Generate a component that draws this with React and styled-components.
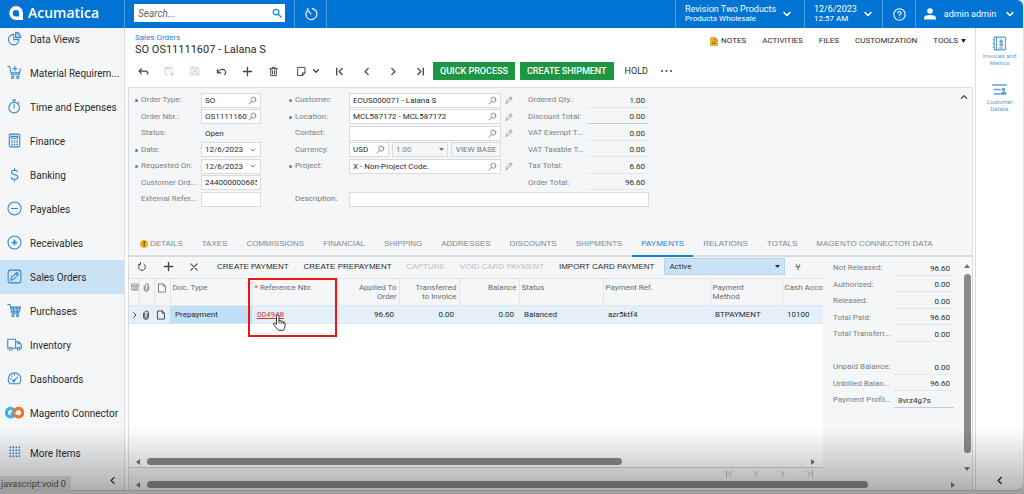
import { useState } from "react";
import styled, { createGlobalStyle, css } from "styled-components";

const GlobalStyle = createGlobalStyle`
  :root {
    --blue: #0073d3;
    --link: #1b83d6;
    --panel: #f5f6f8;
    --line: #d9dbde;
    --text: #2b2b2b;
    --muted: #7b7d80;
    --select: #c9e2f6;
    --green: #1c9643;
  }
  * {
    box-sizing: border-box;
  }
  body {
    margin: 0;
    background: #e4e4e4;
    color: var(--text);
    font: 8px/10px Roboto, "Liberation Sans", sans-serif;
  }
  button,
  input,
  select {
    font: inherit;
    color: inherit;
    margin: 0;
    padding: 0;
    border: none;
    border-radius: 0;
    background: none;
    outline: none;
  }
  button {
    cursor: pointer;
  }
  a {
    color: inherit;
    text-decoration: none;
  }
  svg {
    display: block;
    flex: none;
  }
`;

/* ---------- icons ---------- */

const Svg = ({ size = 12, w, h, box = 16, stroke = 1.3, children, ...rest }) => (
  <svg
    width={w || size}
    height={h || size}
    viewBox={`0 0 ${box} ${box}`}
    fill="none"
    stroke="currentColor"
    strokeWidth={stroke}
    strokeLinecap="round"
    strokeLinejoin="round"
    aria-hidden="true"
    {...rest}
  >
    {children}
  </svg>
);

const shapes = {
  back: <path d="M5 4 1.5 7.5 5 11M2 7.500h9q3.500 0 3.500 4.500" />,
  saveClose: <path d="M6 14H2V2h10l2 2v3M5 2v3h5V2M14 10v4h-4M9 9l5 5" />,
  save: <path d="M2 2h10l2 2v10H2zM5 2v4h6V2M5 14V9h6v5" />,
  undo: <path d="M2 5v5h5M2.500 9.500C5 5 10 3.500 13 6.500c1.500 2 1 4.500-.5 6" />,
  plus: <path d="M8 2v12M2 8h12" />,
  trash: <path d="M2.500 4h11M6 4V2h4v2M4 4v10h8V4M6.500 7v4.500M9.500 7v4.500" />,
  copy: <path d="M3 2h10v8l-3.500 4H3zM13 10H9.500v4" />,
  down: <path d="m4 6 4 4 4-4" />,
  up: <path d="m4 10 4-4 4 4" />,
  first: <path d="M4 3v10M12 3.500 7.500 8l4.500 4.500" />,
  prev: <path d="M10.500 3.500 6 8l4.500 4.500" />,
  next: <path d="M5.500 3.500 10 8l-4.500 4.500" />,
  last: <path d="M12 3v10M4 3.500 8.500 8 4 12.500" />,
  close: <path d="m3 3 10 10M13 3 3 13" />,
  refresh: <path d="M5 3.300a5.500 5.500 0 1 0 6 0M5.500.800v3H2.500" />,
  search: (
    <>
      <circle cx="9.500" cy="6.500" r="4.500" />
      <path d="m6.200 9.800-4.500 4.500" />
    </>
  ),
  searchRight: (
    <>
      <circle cx="6.500" cy="6.500" r="4.500" />
      <path d="m10 10 4.500 4.500" />
    </>
  ),
  pencil: <path d="m2 14 1-4L11.500 1.500l3 3L6 13zM9.500 3.500l3 3" />,
  clip: <path d="M4 5v6a4 4 0 0 0 8 0V4.500a3 3 0 0 0-6 0V11a2 2 0 0 0 4 0V5.500" />,
  page: <path d="M3 1.500h7l3.500 3.500v9.500H3zM10 1.500V5h3.500" />,
  columns: <path d="M2 2h12v12H2zM2 6h12M6 6v8M10 6v8" />,
  filter: <path d="M4 2l2 3M12 2l-2 3M4 7h8M5 7l3 4 3-4M8 11v3" />,
  timer: (
    <>
      <path d="M4.200 3.500a6.300 6.300 0 1 0 5.300-1.600" />
      <path d="m5 4.500 3 3.500M4.500 1.500l-.5 2.500" />
    </>
  ),
  help: (
    <>
      <circle cx="8" cy="8" r="7" />
      <path d="M6 6.200a2 2 0 1 1 2.800 1.900Q8 8.500 8 9.500M8 11.700v.1" />
    </>
  ),
};

const Icon = ({ name, ...rest }) => <Svg {...rest}>{shapes[name]}</Svg>;

const navShapes = {
  data: (
    <>
      <path d="M9 4.500a7 7 0 1 0 7 7H9z" />
      <path d="M11.500 1.500v7.300h6.800A7 7 0 0 0 11.500 1.500z" fill="#a8d0f0" />
    </>
  ),
  material: (
    <>
      <path d="M1 2h2.500l2.500 11h10l2-8M5.500 10.500h11M10.500 2v6M7.500 5h6" />
      <circle cx="7.500" cy="16.500" r="1.500" />
      <circle cx="14.500" cy="16.500" r="1.500" />
    </>
  ),
  time: (
    <>
      <circle cx="9.500" cy="11.500" r="7" />
      <path d="M7.500 1.500h4M9.500 1.500v3M9.500 7.500v4.500M15 5.500l1.500-1.500" />
    </>
  ),
  finance: (
    <>
      <rect x="3" y="1.500" width="14" height="17" rx="1.500" />
      <path d="M5.500 4.500h9v2.500h-9zM6 10.500h1M9.500 10.500h1M13 10.500h1M6 13h1M9.500 13h1M13 13h1M6 15.500h1M9.500 15.500h1M13 15.500h1" />
    </>
  ),
  banking: <path d="M14 6.500C13.500 4 6 3 6 7c0 3.500 8.500 2.500 8.500 6.300S6.500 17.500 5.500 14M10 1.500v3M10 16.300v2.500" />,
  payables: (
    <>
      <circle cx="10" cy="10" r="8.700" />
      <path d="M6 10h8" />
    </>
  ),
  receivables: (
    <>
      <circle cx="10" cy="10" r="8.700" />
      <path d="M7 10h6M10 7v6" strokeWidth="2" />
    </>
  ),
  orders: (
    <>
      <rect x="1.500" y="1.500" width="17" height="17" rx="3" />
      <path d="m5 15 1-3.500L13 4.500l2.500 2.500-7 7zM11.500 6l2.500 2.500" />
    </>
  ),
  purchases: (
    <>
      <path d="M1 2h3l2.500 11.500h9L18 5.500H5M5.500 8h12M6 11h10.500M8.500 5.500l1 8M13.500 5.500l-.5 8" />
      <circle cx="8" cy="16.800" r="1.500" />
      <circle cx="14" cy="16.800" r="1.500" />
    </>
  ),
  inventory: (
    <>
      <path d="M3 15H1V3h10.500v12H7M11.500 6.500H16l3 4V15h-1.500M13.500 15h-2M14 9h3" />
      <circle cx="5" cy="15.500" r="1.900" />
      <circle cx="15.500" cy="15.500" r="1.900" />
    </>
  ),
  dashboards: (
    <>
      <path d="M4 17a8.500 8.500 0 1 1 12 0z" />
      <path d="M9 13.500 14 8M10 4.500v1M4.500 10.500h1M6 6.500l.7.700" />
      <circle cx="9" cy="13" r="1.300" />
    </>
  ),
};

const NavIcon = ({ name }) => {
  if (name === "magento") {
    return (
      <svg width="19" height="13" viewBox="0 0 38 26" fill="none" strokeWidth="6.500" strokeLinecap="round" aria-hidden="true">
        <path d="M17 19.500A8.500 8.500 0 1 1 18.500 9" stroke="#35b4f3" />
        <path d="M21 19.500a8.500 8.500 0 1 0-1.500-10L15 16" stroke="#f5702a" />
        <path d="M12.500 15q3.500-1 5 3" stroke="#35b4f3" strokeWidth="4" />
      </svg>
    );
  }
  if (name === "more") {
    return (
      <svg width="12" height="12" viewBox="0 0 12 12" fill="#2f86cc" aria-hidden="true">
        {[0, 3, 6, 9].map((x) => [0, 3, 6, 9].map((y) => <rect key={`${x}-${y}`} x={x + 0.5} y={y + 0.5} width="1.600" height="1.600" />))}
      </svg>
    );
  }
  return (
    <Svg size={15} box={20} stroke={1.4}>
      {navShapes[name]}
    </Svg>
  );
};

const Arrow = ({ points = "0,0 6,0 3,4", w = 6, h = 4 }) => (
  <svg width={w} height={h} viewBox={`0 0 ${w} ${h}`} fill="currentColor" aria-hidden="true">
    <polygon points={points} />
  </svg>
);

/* ---------- shell ---------- */

const Shell = styled.div`
  min-height: 100vh;
  display: flex;
  padding: 0 1px 3px 0;
  position: relative;
`;
const Window = styled.div`
  flex: 1;
  min-width: 0;
  display: flex;
  flex-direction: column;
  background: white;
  border-radius: 0 6px 8px 0;
  border-bottom: 1px solid #c9c9c9;
  overflow: hidden;
`;
const Shade = styled.div`
  position: absolute;
  inset: auto 0 0 0;
  height: 66px;
  background: linear-gradient(rgba(0, 0, 0, 0), rgba(0, 0, 0, 0.3));
  pointer-events: none;
  z-index: 5;
`;

/* ---------- header ---------- */

const TopBar = styled.header`
  height: 28px;
  display: flex;
  background: var(--blue);
  color: white;
`;
const TopCell = styled.div`
  display: flex;
  align-items: center;
  width: ${({ $width }) => $width || "auto"};
  flex: ${({ $grow }) => ($grow ? 1 : "none")};
  padding: ${({ $pad }) => $pad || "0"};
  justify-content: ${({ $justify }) => $justify || "flex-start"};
  border-right: ${({ $last }) => ($last ? "none" : "1px solid #4b9fe4")};
`;
const Brand = styled.a`
  display: flex;
  align-items: center;
  gap: 5px;
  font: 600 14px/20px "Open Sans", "Noto Sans", sans-serif;
`;
const SearchBox = styled.form`
  flex: 1;
  height: 18px;
  margin-bottom: 2px;
  display: flex;
  align-items: center;
  background: white;
  padding: 0 3px 0 4px;
  color: var(--link);
  input {
    flex: 1;
    min-width: 0;
    font-size: 10px;
    color: #333;
  }
  input::placeholder {
    color: #666;
    font-style: italic;
    opacity: 1;
  }
`;
const TopButton = styled.button`
  display: flex;
  align-items: center;
  justify-content: space-between;
  gap: 5px;
  width: 100%;
  text-align: left;
  font-size: 9px;
  white-space: nowrap;
`;
const TopLines = styled.span`
  display: flex;
  flex-direction: column;
  padding-bottom: 1px;
  small {
    font-size: 8px;
  }
`;

/* ---------- body ---------- */

const Body = styled.div`
  flex: 1;
  display: flex;
  min-height: 0;
`;
const Sidebar = styled.aside`
  width: 125px;
  flex: none;
  display: flex;
  flex-direction: column;
  background: var(--panel);
  border-right: 1px solid var(--line);
  overflow: hidden;
`;
const NavList = styled.nav`
  margin-top: -6px;
  display: flex;
  flex-direction: column;
  flex: 1;
`;
const NavItem = styled.a`
  height: 34px;
  display: flex;
  align-items: center;
  padding-top: 1px;
  font-size: 10px;
  line-height: 12px;
  background: ${({ $active }) => ($active ? "var(--select)" : "none")};
  margin-top: ${({ $spaced }) => ($spaced ? "6px" : "0")};
  > i {
    width: 30px;
    padding-right: 1px;
    padding-bottom: 3px;
    display: flex;
    justify-content: center;
    color: #2f86cc;
  }
`;
const CollapseRow = styled.div`
  height: 20px;
  display: flex;
  align-items: center;
  justify-content: flex-end;
  padding-right: 6px;
`;
const StatusTip = styled.div`
  position: absolute;
  left: 0;
  bottom: 2px;
  height: 16px;
  padding: 3px 5px 3px 1px;
  font-size: 9px;
  background: #dcdcdc;
  color: #555;
  border-radius: 0 3px 0 0;
`;

const Rail = styled.aside`
  width: 48px;
  flex: none;
  border-left: 1px solid var(--line);
  display: flex;
  flex-direction: column;
  align-items: center;
  padding: 8px 0 0;
  gap: 16px;
  > ${CollapseRow} {
    margin-top: auto;
    padding-right: 0;
  }
`;
const RailLink = styled.a`
  display: flex;
  flex-direction: column;
  align-items: center;
  gap: 1px;
  width: 38px;
  text-align: center;
  font-size: 6px;
  line-height: 7px;
  color: #5b9ed8;
`;

const Main = styled.main`
  flex: 1;
  min-width: 0;
  display: flex;
  flex-direction: column;
  margin: 0 2px 0 3px;
`;
const TitleRow = styled.div`
  display: flex;
  justify-content: space-between;
  padding: 5px 7px 0 7px;
`;
const Crumb = styled.a`
  color: var(--link);
`;
const Title = styled.h1`
  margin: 0;
  font-size: 11px;
  line-height: 14px;
  font-weight: 400;
`;
const ScreenMenu = styled.nav`
  display: flex;
  align-items: flex-start;
  gap: 16px;
  padding-top: 3px;
`;
const MenuButton = styled.button`
  display: flex;
  align-items: center;
  gap: 3px;
`;
const Toolbar = styled.div`
  height: 30px;
  display: flex;
  align-items: center;
  padding: 0 0 2px 2px;
`;
const ToolButton = styled.button`
  width: 26px;
  height: 18px;
  display: flex;
  align-items: center;
  justify-content: center;
  color: #444;
  opacity: ${({ disabled }) => (disabled ? 0.3 : 1)};
`;
const SplitGroup = styled.div`
  display: flex;
  align-items: center;
  gap: 4px;
  padding: 0 5px 0 10px;
  color: #444;
`;
const PagerGroup = styled.div`
  display: flex;
  gap: 1px;
`;
const ActionButton = styled.button`
  height: 18px;
  padding: 0 7px;
  margin-right: 5px;
  background: var(--green);
  color: white;
  font-size: 9px;
  font-weight: 500;
`;
const PlainButton = styled.button`
  padding: 0 6px;
  font-size: 9px;
`;

/* ---------- document form ---------- */

const Panel = styled.section`
  flex: 1;
  display: flex;
  flex-direction: column;
  background: var(--panel);
  border: 1px solid var(--line);
  border-bottom: none;
`;
const FormArea = styled.form`
  display: flex;
  gap: 27px;
  padding: 4px 3px 24px 5px;
`;
const FormGrid = styled.div`
  display: grid;
  grid-auto-rows: 16px 17px;
  grid-template-columns: ${({ $columns }) => $columns};
  align-items: center;
  align-content: start;
`;
const FieldLabel = styled.label`
  color: var(--muted);
  white-space: nowrap;
  overflow: hidden;
  text-overflow: ellipsis;
  padding-left: 7px;
  position: relative;
  ${({ $required }) =>
    $required &&
    css`
      &::before {
        content: "";
        position: absolute;
        left: 1px;
        top: 4px;
        width: 3px;
        height: 3px;
        border-radius: 50%;
        background: #77797c;
      }
    `}
`;
const Field = styled.div`
  height: 15px;
  min-width: 0;
  display: flex;
  align-items: center;
  border: 1px solid ${({ $bare }) => ($bare ? "transparent" : "var(--line)")};
  background: ${({ $bare, $gray }) => ($bare || $gray ? "transparent" : "white")};
  padding: 0 3px;
  grid-column: ${({ $span }) => ($span ? `span ${$span}` : "auto")};
  color: ${({ $gray }) => ($gray ? "#888" : "var(--text)")};
  input,
  select {
    flex: 1;
    width: 100%;
    min-width: 0;
    padding-top: 1px;
    appearance: none;
  }
  button,
  > svg {
    color: #777;
  }
`;
const CurrencyRow = styled.div`
  display: grid;
  grid-template-columns: 40px 56px 1fr;
  gap: 3px;
`;
const ViewBase = styled.button`
  border: 1px solid var(--line);
  color: #777;
`;
const EditButton = styled.button`
  padding-left: 4px;
  color: #777;
`;
const TotalInput = styled.input`
  width: 100%;
  height: 15px;
  text-align: ${({ $left }) => ($left ? "left" : "right")};
  padding: 1px 4px 0;
  border-bottom: 1px solid ${({ $strong }) => ($strong ? "#c9cbce" : "#e6e8ea")};
`;
const PanelToggle = styled.button`
  margin-left: auto;
  align-self: flex-start;
  color: #555;
`;

/* ---------- tabs ---------- */

const TabBar = styled.div`
  height: 26px;
  display: flex;
  gap: 1px;
  padding-left: 2px;
  border-bottom: 2px solid var(--line);
  font-family: "Liberation Sans", Arial, sans-serif;
`;
const Tab = styled.button`
  height: 26px;
  padding: 2px 9px 0;
  display: flex;
  align-items: center;
  white-space: nowrap;
  color: ${({ $active }) => ($active ? "var(--link)" : "#85878a")};
  border-bottom: 2px solid ${({ $active }) => ($active ? "var(--link)" : "transparent")};
`;
const Badge = styled.span`
  width: 8px;
  height: 8px;
  margin-right: 2px;
  border-radius: 50%;
  background: #f2b01e;
  color: #3a2a00;
  font: 700 8px/8px "Liberation Sans", sans-serif;
  text-align: center;
`;
const TabContent = styled.div`
  flex: 1;
  display: flex;
  min-height: 0;
`;
const GridPane = styled.div`
  flex: 1;
  min-width: 0;
  display: flex;
  flex-direction: column;
  background: white;
  position: relative;
`;
const GridToolbar = styled(Toolbar)`
  height: 21px;
  background: var(--panel);
  padding-left: 0;
`;
const GridActions = styled.div`
  display: flex;
  gap: 15px;
  padding: 0 10px;
  white-space: nowrap;
  font-family: "Liberation Sans", Arial, sans-serif;
  button:disabled {
    color: #bfc1c4;
  }
`;
const FilterSelect = styled.label`
  width: 121px;
  height: 17px;
  display: flex;
  align-items: center;
  background: var(--select);
  border: 1px solid #b7d3e9;
  padding: 0 4px;
  select {
    flex: 1;
    appearance: none;
  }
`;
const GridClip = styled.div`
  flex: 1;
  overflow: hidden;
`;
const Table = styled.table`
  width: 100%;
  table-layout: fixed;
  border-collapse: collapse;
  th,
  td {
    overflow: hidden;
    white-space: nowrap;
    text-align: left;
  }
  th {
    height: 27px;
    vertical-align: top;
    padding: 4px 2px 0;
    line-height: 9px;
    font-weight: 400;
    color: #696b6e;
    background: var(--panel);
    border: 1px solid #e4e6e8;
    border-left: none;
  }
  th:last-child {
    padding-right: 0;
    border-right: none;
  }
  td {
    height: 18px;
    padding: 0 5px;
    background: #e3f0fa;
    border-bottom: 1px solid #dde5ec;
  }
  .num {
    text-align: right;
  }
  .icon {
    padding-left: 2px;
    padding-right: 0;
  }
  td.current {
    background: #bfdff7;
  }
  td a {
    color: #d9342b;
    text-decoration: underline;
  }
  em {
    color: #e33;
    font-style: normal;
  }
`;
const ScrollRow = styled.div`
  height: 11px;
  display: flex;
  align-items: center;
  gap: 7px;
  padding: 0 ${({ $end }) => $end || "8px"} 0 7px;
  color: #777;
`;
const Thumb = styled.div`
  height: ${({ $vertical }) => ($vertical ? "auto" : "7px")};
  width: ${({ $vertical, $size }) => ($vertical ? "7px" : $size)};
  flex: ${({ $vertical, $size }) => ($vertical ? $size : "none")};
  margin-right: auto;
  border-radius: 4px;
  background: #8b8b8b;
`;
const PagerRow = styled.div`
  height: 12px;
  display: flex;
  justify-content: flex-end;
  align-items: flex-end;
  gap: 17px;
  padding-right: 8px;
  background: var(--panel);
  border-top: 1px solid #cfd1d4;
  color: #aaa;
`;
const Highlight = styled.div`
  position: absolute;
  left: 119px;
  top: 21px;
  width: 89px;
  height: 59px;
  border: 2px solid #f01414;
  pointer-events: none;
  svg {
    position: absolute;
    left: 22px;
    top: 34px;
  }
`;
const SidePane = styled.div`
  width: 139px;
  padding: 3px 8px 0 3px;
`;
const VScroll = styled.div`
  width: 10px;
  display: flex;
  flex-direction: column;
  align-items: center;
  gap: 6px;
  padding: 7px 0 8px;
  background: #f8f9fa;
  color: #777;
  ${Thumb} {
    margin: 0 0 8px;
  }
`;

/* ---------- data ---------- */

const navItems = [
  ["data", "Data Views"],
  ["material", "Material Requirem..."],
  ["time", "Time and Expenses"],
  ["finance", "Finance"],
  ["banking", "Banking"],
  ["payables", "Payables"],
  ["receivables", "Receivables"],
  ["orders", "Sales Orders"],
  ["purchases", "Purchases"],
  ["inventory", "Inventory"],
  ["dashboards", "Dashboards"],
  ["magento", "Magento Connector"],
  ["more", "More Items"],
];

const orderFields = [
  { label: "Order Type:", value: "SO", icon: "search", required: true },
  { label: "Order Nbr.:", value: "OS11111607", icon: "search" },
  { label: "Status:", value: "Open", bare: true },
  { label: "Date:", value: "12/6/2023", icon: "down", required: true },
  { label: "Requested On:", value: "12/6/2023", icon: "down", required: true },
  { label: "Customer Ord...", value: "244000000685" },
  { label: "External Refer...", value: "" },
];

const customerFields = [
  { label: "Customer:", value: "ECUS000071 - Lalana S", required: true, total: ["Ordered Qty.:", "1.00"] },
  { label: "Location:", value: "MCL587172 - MCL587172", required: true, total: ["Discount Total:", "0.00"] },
  { label: "Contact:", value: "", total: ["VAT Exempt T...", "0.00"] },
  { label: "Currency:", currency: true, total: ["VAT Taxable T...", "0.00"] },
  { label: "Project:", value: "X - Non-Project Code.", required: true, total: ["Tax Total:", "6.60"] },
  { total: ["Order Total:", "96.60"] },
];

const tabs = [
  "DETAILS",
  "TAXES",
  "COMMISSIONS",
  "FINANCIAL",
  "SHIPPING",
  "ADDRESSES",
  "DISCOUNTS",
  "SHIPMENTS",
  "PAYMENTS",
  "RELATIONS",
  "TOTALS",
  "MAGENTO CONNECTOR DATA",
];

const gridActions = [
  ["CREATE PAYMENT"],
  ["CREATE PREPAYMENT"],
  ["CAPTURE", true],
  ["VOID CARD PAYMENT", true],
  ["IMPORT CARD PAYMENT"],
];

const paymentTotals = [
  ["Not Released:", "96.60"],
  ["Authorized:", "0.00"],
  ["Released:", "0.00"],
  ["Total Paid:", "96.60"],
  ["Total Transferr...", "0.00"],
  null,
  ["Unpaid Balance:", "0.00"],
  ["Unbilled Balan...", "96.60"],
  ["Payment Profil...", "8vrz4g7s"],
];

/* ---------- parts ---------- */

const Header = () => (
  <TopBar>
    <TopCell $width="125px" $pad="0 0 2px 9px">
      <Brand href="#">
        <svg width="14" height="14" viewBox="0 0 28 28" fill="white" aria-hidden="true">
          <path fillRule="evenodd" d="M14 0a14 14 0 0 1 14 14v14H15A14 14 0 0 1 14 0zm0 8a6.500 6.500 0 1 0 0 13h6v-7a6 6 0 0 0-6-6z" />
        </svg>
        Acumatica
      </Brand>
    </TopCell>
    <TopCell $width="170px" $pad="0 9px">
      <SearchBox role="search">
        <input aria-label="Search" placeholder="Search..." />
        <Icon name="searchRight" size={10} stroke={2} />
      </SearchBox>
    </TopCell>
    <TopCell $width="32px" $justify="center">
      <button aria-label="Recent">
        <Icon name="timer" size={14} />
      </button>
    </TopCell>
    <TopCell $grow />
    <TopCell $width="129px" $pad="0 12px 0 9px">
      <TopButton>
        <TopLines>
          Revision Two Products
          <small>Products Wholesale</small>
        </TopLines>
        <Icon name="down" size={12} stroke={2} />
      </TopButton>
    </TopCell>
    <TopCell $width="78px" $pad="0 10px 0 9px">
      <TopButton>
        <TopLines>
          12/6/2023
          <small>12:57 AM</small>
        </TopLines>
        <Icon name="down" size={12} stroke={2} />
      </TopButton>
    </TopCell>
    <TopCell $width="33px" $justify="center">
      <button aria-label="Help">
        <Icon name="help" size={13} />
      </button>
    </TopCell>
    <TopCell $width="107px" $last $pad="0 7px 0 8px">
      <TopButton>
        <svg width="12" height="12" viewBox="0 0 12 12" fill="white" aria-hidden="true">
          <circle cx="6" cy="3" r="2.800" />
          <path d="M0 11.500V10q0-3 6-3t6 3v1.500z" />
        </svg>
        admin admin
        <Icon name="down" size={12} stroke={2} />
      </TopButton>
    </TopCell>
  </TopBar>
);

const FormField = ({ id, label, value, icon, required, bare }) => (
  <>
    <FieldLabel htmlFor={id} $required={required}>
      {label}
    </FieldLabel>
    <Field $bare={bare}>
      <input id={id} defaultValue={value} readOnly={bare} />
      {icon && (
        <button type="button" aria-label={`Select ${label}`}>
          <Icon name={icon} size={icon === "down" ? 8 : 9} stroke={icon === "down" ? 2 : 1.4} />
        </button>
      )}
    </Field>
  </>
);

const OrderForm = () => (
  <FormArea>
    <FormGrid $columns="67px 60px">
      {orderFields.map((field, i) => (
        <FormField key={field.label} id={`order-${i}`} {...field} />
      ))}
    </FormGrid>
    <FormGrid $columns="61px 152px 20px 66px 62px">
      {customerFields.map(({ label, value, required, currency, total }, i) => [
        label ? (
          <FieldLabel key={`l${i}`} htmlFor={`cust-${i}`} $required={required}>
            {label}
          </FieldLabel>
        ) : (
          <span key={`l${i}`} />
        ),
        !label && <span key={`f${i}`} />,
        currency && (
          <CurrencyRow key={`f${i}`}>
            <Field>
              <input id={`cust-${i}`} defaultValue="USD" />
              <Icon name="search" size={9} stroke={1.4} />
            </Field>
            <Field $gray>
              <select aria-label="Currency rate" defaultValue="1.00">
                <option>1.00</option>
              </select>
              <Arrow w={5} h={3} points="0,0 5,0 2.5,3" />
            </Field>
            <ViewBase type="button">VIEW BASE</ViewBase>
          </CurrencyRow>
        ),
        label && !currency && (
          <Field key={`f${i}`}>
            <input id={`cust-${i}`} defaultValue={value} />
            <button type="button" aria-label={`Select ${label}`}>
              <Icon name="search" size={9} stroke={1.4} />
            </button>
          </Field>
        ),
        label && !currency ? (
          <EditButton key={`e${i}`} type="button" aria-label={`Edit ${label}`}>
            <Icon name="pencil" size={8} />
          </EditButton>
        ) : (
          <span key={`e${i}`} />
        ),
        <FieldLabel key={`t${i}`} htmlFor={`total-${i}`}>
          {total[0]}
        </FieldLabel>,
        <TotalInput key={`v${i}`} id={`total-${i}`} readOnly value={total[1]} $strong={i === 1} />,
      ])}
      <FieldLabel htmlFor="description">Description:</FieldLabel>
      <Field $span={4}>
        <input id="description" />
      </Field>
    </FormGrid>
    <PanelToggle type="button" aria-label="Collapse form">
      <Icon name="up" size={10} stroke={2.2} />
    </PanelToggle>
  </FormArea>
);

const PaymentsGrid = () => (
  <Table>
    <colgroup>
      <col width="10" />
      <col width="15" />
      <col width="16" />
      <col width="82" />
      <col width="85" />
      <col width="62" />
      <col width="60" />
      <col width="60" />
      <col width="84" />
      <col />
      <col width="72" />
      <col width="41" />
    </colgroup>
    <thead>
      <tr>
        <th className="icon">
          <Icon name="columns" size={8} />
        </th>
        <th className="icon">
          <Icon name="clip" size={9} />
        </th>
        <th className="icon">
          <Icon name="page" size={10} />
        </th>
        <th>Doc. Type</th>
        <th>
          <em>*</em> Reference Nbr.
        </th>
        <th className="num">
          Applied To
          <br />
          Order
        </th>
        <th className="num">
          Transferred
          <br />
          to Invoice
        </th>
        <th className="num">Balance</th>
        <th>Status</th>
        <th>Payment Ref.</th>
        <th>
          Payment
          <br />
          Method
        </th>
        <th>Cash Acco</th>
      </tr>
    </thead>
    <tbody>
      <tr>
        <td className="icon">
          <Icon name="next" size={8} stroke={1.8} />
        </td>
        <td className="icon">
          <Icon name="clip" size={10} />
        </td>
        <td className="icon">
          <Icon name="page" size={10} />
        </td>
        <td className="current">Prepayment</td>
        <td>
          <a href="#">004948</a>
        </td>
        <td className="num">96.60</td>
        <td className="num">0.00</td>
        <td className="num">0.00</td>
        <td>Balanced</td>
        <td>azr5ktf4</td>
        <td>BTPAYMENT</td>
        <td>10100</td>
      </tr>
    </tbody>
  </Table>
);

export default function App() {
  const [active, setActive] = useState("PAYMENTS");

  return (
    <>
      <GlobalStyle />
      <Shell>
        <Window>
          <Header />
          <Body>
            <Sidebar>
              <NavList>
                {navItems.map(([icon, name]) => (
                  <NavItem key={name} href="#" $active={icon === "orders"} $spaced={icon === "more"}>
                    <i>
                      <NavIcon name={icon} />
                    </i>
                    {name}
                  </NavItem>
                ))}
              </NavList>
              <CollapseRow>
                <button aria-label="Collapse menu">
                  <Icon name="prev" size={11} stroke={1.6} />
                </button>
              </CollapseRow>
            </Sidebar>

            <Main>
              <TitleRow>
                <div>
                  <Crumb href="#">Sales Orders</Crumb>
                  <Title>SO OS11111607 - Lalana S</Title>
                </div>
                <ScreenMenu>
                  <MenuButton>
                    <svg width="8" height="9" viewBox="0 0 16 18" aria-hidden="true">
                      <path d="M1 1h9l5 5v11H1z" fill="#f3b51b" stroke="#b98517" />
                      <path d="M10 1v5h5M4 10h8M4 13h8" fill="none" stroke="#8a6410" strokeWidth="1.500" />
                    </svg>
                    NOTES
                  </MenuButton>
                  <MenuButton>ACTIVITIES</MenuButton>
                  <MenuButton>FILES</MenuButton>
                  <MenuButton>CUSTOMIZATION</MenuButton>
                  <MenuButton>
                    TOOLS
                    <Arrow w={5} h={4} points="0,0 5,0 2.5,4" />
                  </MenuButton>
                </ScreenMenu>
              </TitleRow>

              <Toolbar>
                <ToolButton aria-label="Back">
                  <Icon name="back" size={11} stroke={1.6} />
                </ToolButton>
                <ToolButton aria-label="Save and close" disabled>
                  <Icon name="saveClose" size={10} />
                </ToolButton>
                <ToolButton aria-label="Save" disabled>
                  <Icon name="save" size={10} />
                </ToolButton>
                <ToolButton aria-label="Undo">
                  <Icon name="undo" size={11} stroke={1.6} />
                </ToolButton>
                <ToolButton aria-label="Add">
                  <Icon name="plus" size={11} stroke={1.9} />
                </ToolButton>
                <ToolButton aria-label="Delete">
                  <Icon name="trash" size={11} stroke={1.4} />
                </ToolButton>
                <SplitGroup>
                  <button aria-label="Copy">
                    <Icon name="copy" size={11} stroke={1.4} />
                  </button>
                  <button aria-label="Copy options">
                    <Icon name="down" size={10} stroke={2} />
                  </button>
                </SplitGroup>
                <PagerGroup>
                  {["first", "prev", "next", "last"].map((name) => (
                    <ToolButton key={name} aria-label={name}>
                      <Icon name={name} size={11} stroke={1.9} />
                    </ToolButton>
                  ))}
                </PagerGroup>
                <ActionButton>QUICK PROCESS</ActionButton>
                <ActionButton>CREATE SHIPMENT</ActionButton>
                <PlainButton>HOLD</PlainButton>
                <ToolButton aria-label="More actions">
                  <svg width="11" height="2" viewBox="0 0 11 2" fill="currentColor" aria-hidden="true">
                    <circle cx="1" cy="1" r="1" />
                    <circle cx="5.500" cy="1" r="1" />
                    <circle cx="10" cy="1" r="1" />
                  </svg>
                </ToolButton>
              </Toolbar>

              <Panel>
                <OrderForm />
                <TabBar role="tablist">
                  {tabs.map((name) => (
                    <Tab key={name} role="tab" $active={name === active} aria-selected={name === active} onClick={() => setActive(name)}>
                      {name === "DETAILS" && <Badge>!</Badge>}
                      {name}
                    </Tab>
                  ))}
                </TabBar>
                <TabContent>
                  <GridPane>
                    <GridToolbar>
                      <ToolButton aria-label="Refresh">
                        <Icon name="refresh" size={10} stroke={1.6} />
                      </ToolButton>
                      <ToolButton aria-label="Add row">
                        <Icon name="plus" size={11} stroke={1.9} />
                      </ToolButton>
                      <ToolButton aria-label="Delete row">
                        <Icon name="close" size={10} stroke={1.7} />
                      </ToolButton>
                      <GridActions>
                        {gridActions.map(([name, off]) => (
                          <button key={name} disabled={off}>
                            {name}
                          </button>
                        ))}
                      </GridActions>
                      <FilterSelect>
                        <select aria-label="Filter" defaultValue="Active">
                          <option>Active</option>
                        </select>
                        <Arrow w={5} h={3} points="0,0 5,0 2.5,3" />
                      </FilterSelect>
                      <ToolButton aria-label="Filter settings">
                        <Icon name="filter" size={8} />
                      </ToolButton>
                    </GridToolbar>
                    <GridClip>
                      <PaymentsGrid />
                    </GridClip>
                    <ScrollRow>
                      <Arrow w={4} h={6} points="4,0 4,6 0,3" />
                      <Thumb $size="70%" />
                      <Arrow w={4} h={6} points="0,0 0,6 4,3" />
                    </ScrollRow>
                    <PagerRow>
                      {["first", "prev", "next", "last"].map((name) => (
                        <Icon key={name} name={name} size={10} />
                      ))}
                    </PagerRow>
                    <Highlight>
                      <svg width="15" height="17" viewBox="0 0 15 17" fill="white" stroke="#333" strokeLinejoin="round" aria-hidden="true">
                        <path d="M4.500 10V2.200q0-1.400 1.200-1.400T7 2.200V6.500q1.600-.6 2.100.6 1.600-.5 2.100.8 1.600-.2 1.800 1.300v3.300q-.5 2-1.500 3.800H6.500Q4.500 14 1.500 10.500q-.5-1.300.7-1.500 1 0 2.300 1.500z" />
                        <path d="M7 6.500v3M9.100 7.300v2.500M11.200 8v2" fill="none" />
                      </svg>
                    </Highlight>
                  </GridPane>
                  <SidePane>
                    <FormGrid $columns="68px 1fr">
                      {paymentTotals.map((row, i) =>
                        row
                          ? [
                              <FieldLabel key={`l${i}`} htmlFor={`pay-${i}`}>
                                {row[0]}
                              </FieldLabel>,
                              <TotalInput key={`v${i}`} id={`pay-${i}`} readOnly value={row[1]} $left={i === 8} $strong={i === 8} />,
                            ]
                          : [<span key="a" />, <span key="b" />]
                      )}
                    </FormGrid>
                  </SidePane>
                  <VScroll>
                    <Arrow w={6} h={4} points="0,4 6,4 3,0" />
                    <Thumb $vertical $size="1" />
                    <Arrow w={6} h={4} />
                  </VScroll>
                </TabContent>
                <ScrollRow $end="17px">
                  <Arrow w={4} h={6} points="4,0 4,6 0,3" />
                  <Thumb $size="88%" />
                  <Arrow w={4} h={6} points="0,0 0,6 4,3" />
                </ScrollRow>
              </Panel>
            </Main>

            <Rail>
              <RailLink href="#">
                <Svg size={15} box={20} stroke={1.5}>
                  <rect x="3" y="1.500" width="15" height="17" rx="1" />
                  <path d="M6 1.500v17M3 5H1.500M3 10H1.500M3 15H1.500M14.500 7.500Q12 5 10.500 7q-.5 2 2 2.300 2.500.7 1.500 2.700-2 1.500-4-.5M12.200 4.500v9.500M9 16h6" />
                </Svg>
                Invoices and Memos
              </RailLink>
              <RailLink href="#">
                <Svg size={15} box={20} stroke={1.7}>
                  <path d="M1 4h18M3 10h8M3 16h8" />
                  <circle cx="15.500" cy="10" r="1.500" fill="currentColor" />
                  <path d="M12.500 16q0-2.500 3-2.500t3 2.500z" fill="currentColor" />
                </Svg>
                Customer Details
              </RailLink>
              <CollapseRow>
                <button aria-label="Expand side panel">
                  <Icon name="prev" size={11} stroke={2} />
                </button>
              </CollapseRow>
            </Rail>
          </Body>
        </Window>
        <StatusTip>javascript:void 0</StatusTip>
        <Shade />
      </Shell>
    </>
  );
}
